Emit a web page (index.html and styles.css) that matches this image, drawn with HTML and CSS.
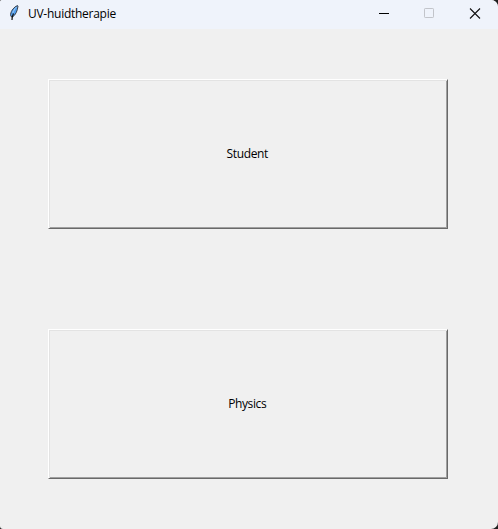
FILE: index.html
```html
<!DOCTYPE html>
<html lang="nl">
<head>
<meta charset="utf-8">
<title>UV-huidtherapie</title>
<link rel="stylesheet" href="styles.css">
</head>
<body>
<div class="window">
  <header class="titlebar">
    <svg class="feather" width="12" height="18" viewBox="0 0 12 18">
      <path d="M9.500 1.500C6 3 3 6.500 2.500 10.500L3 12.500 4.500 13C7.500 11 9.500 7 10 2Z" fill="#4f9cec" stroke="#3b424b" stroke-width="1"/>
      <path d="M8.500 3C6.500 5 5.500 7 4.800 9" fill="none" stroke="#a4cdf3" stroke-width="1"/>
      <path d="M5.500 9.500C4.500 11.500 4 13 4 16" fill="none" stroke="#111" stroke-width="1.200"/>
    </svg>
    <h1 class="title">UV-huidtherapie</h1>
    <div class="controls">
      <svg width="45" height="29"><path d="M16 13.500H26" stroke="#000"/></svg>
      <svg width="45" height="29"><rect x="16.500" y="8.500" width="9" height="9" rx=".7" fill="none" stroke="#c2c4ca"/></svg>
      <svg width="45" height="29"><path d="M17 8.500L27 18.500M27 8.500L17 18.500" stroke="#111" stroke-width="1.100"/></svg>
    </div>
  </header>
  <main class="content">
    <button class="choice"><span class="label">Student</span></button>
    <button class="choice"><span class="label">Physics</span></button>
  </main>
</div>
</body>
</html>
```
FILE: styles.css
```css
* { box-sizing: border-box; }
body { margin: 0; background: #202020; font: 12px/20px "Open Sans", "Noto Sans", sans-serif; color: #000; }
svg { display: block; }
.window { width: 498px; height: 529px; overflow: hidden; background: #f0f0f0; border-radius: 2px 7px 7px 3px; }
.titlebar { display: flex; height: 29px; background: #eff3fb; }
.feather { margin: 4px 8px 0 8px; }
.title { margin: 4px 0 0; font-size: 12px; font-weight: 400; letter-spacing: -0.27px; }
.controls { display: flex; margin-left: auto; }
.content { display: flex; flex-direction: column; gap: 100px; padding: 50px 50px 50px 48px; }
.choice {
  display: flex; align-items: center; justify-content: center;
  width: 400px; height: 150px; padding: 0 1.5px 0 0; border: 1px solid;
  border-color: #fff #696969 #696969 #fff;
  box-shadow: inset 1px 1px #e3e3e3, inset -1px -1px #a0a0a0;
  background: #f0f0f0; color: #000; font: inherit;
}
.label { letter-spacing: -0.38px; }
```
